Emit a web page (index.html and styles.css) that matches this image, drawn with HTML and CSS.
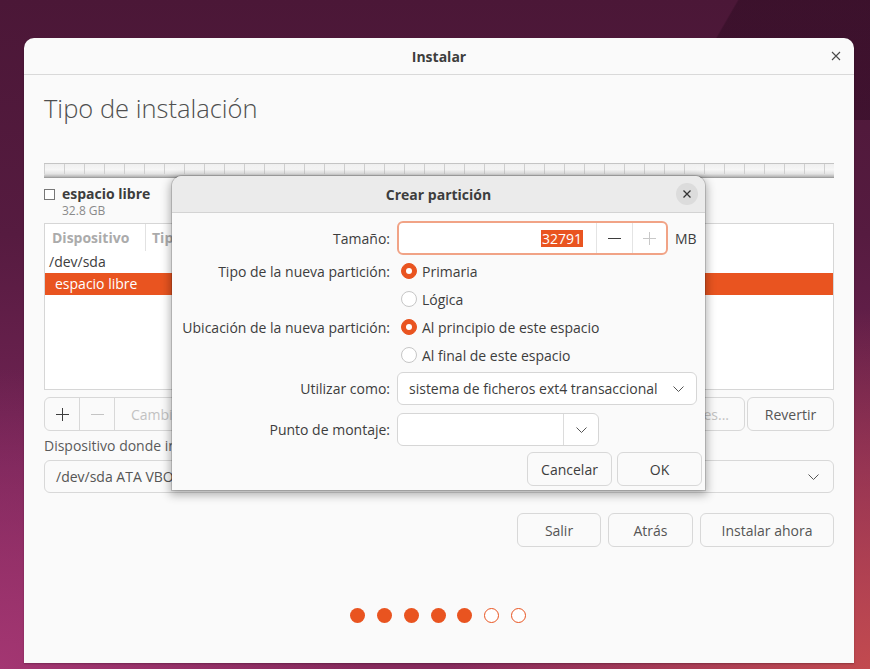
FILE: index.html
```html
<!DOCTYPE html>
<html lang="es">
<head>
<meta charset="utf-8">
<title>Instalar</title>
<link rel="stylesheet" href="styles.css">
</head>
<body>
<div class="desktop">
  <div class="window">
    <header class="titlebar">
      <span></span>
      <span class="title">Instalar</span>
      <span class="wclose"><svg width="10" height="10" viewBox="0 0 10 10"><path d="M1 1l8 8M9 1l-8 8" stroke="#4a4a4a" stroke-width="1.1" fill="none"/></svg></span>
    </header>
    <main class="content">
      <h1 class="heading">Tipo de instalación</h1>
      <div class="partbar"></div>
      <div class="legend">
        <span class="check"></span>
        <div>
          <div class="legend-name">espacio libre</div>
          <div class="legend-size">32.8 GB</div>
        </div>
      </div>
      <div class="table">
        <div class="thead">
          <span class="th th1">Dispositivo</span>
          <span class="th th2">Tipo</span>
        </div>
        <div class="trow">/dev/sda</div>
        <div class="trow sel">espacio libre</div>
      </div>
      <div class="toolbar">
        <div class="group">
          <span class="gbtn icon"><svg width="13" height="13" viewBox="0 0 13 13"><path d="M6.5 0v13M0 6.5h13" stroke="#3d3d3d" stroke-width="1" fill="none"/></svg></span>
          <span class="gbtn icon"><svg width="13" height="13" viewBox="0 0 13 13"><path d="M0 6.5h13" stroke="#c4c4c4" stroke-width="1" fill="none"/></svg></span>
          <span class="gbtn text dis">Cambiar...</span>
        </div>
        <span class="spacer"></span>
        <span class="btn dis newtable">Nueva tabla de particiones...</span>
        <span class="btn revert">Revertir</span>
      </div>
      <div class="boot-label">Dispositivo donde instalar el cargador de arranque:</div>
      <div class="boot-combo">
        <span>/dev/sda ATA VBOX HARDDISK (32.8 GB)</span>
        <svg width="11" height="6" viewBox="0 0 11 6"><path d="M0.5 0.5l5 5 5-5" stroke="#555" stroke-width="1" fill="none"/></svg>
      </div>
      <div class="actions">
        <span class="btn act w84">Salir</span>
        <span class="btn act w85">Atrás</span>
        <span class="btn act w134">Instalar ahora</span>
      </div>
      <div class="dots">
        <span class="dot"></span><span class="dot"></span><span class="dot"></span><span class="dot"></span><span class="dot"></span><span class="dot open"></span><span class="dot open"></span>
      </div>
    </main>

    <section class="dialog">
      <header class="dhead">
        <span></span>
        <span class="dtitle">Crear partición</span>
        <span class="dclose"><svg width="10" height="10" viewBox="0 0 10 10"><path d="M1.5 1.5l7 7M8.5 1.5l-7 7" stroke="#333" stroke-width="1.3" fill="none"/></svg></span>
      </header>
      <div class="dbody">
        <div class="frow r-size">
          <span class="flabel">Tamaño:</span>
          <div class="fctl">
            <div class="spin">
              <span class="spin-text"><span class="selected">32791</span></span>
              <span class="spin-btn"><svg width="13" height="13" viewBox="0 0 13 13"><path d="M0 6.5h13" stroke="#3d3d3d" stroke-width="1" fill="none"/></svg></span>
              <span class="spin-btn last"><svg width="13" height="13" viewBox="0 0 13 13"><path d="M6.5 0v13M0 6.5h13" stroke="#c8c8c8" stroke-width="1" fill="none"/></svg></span>
            </div>
            <span class="unit">MB</span>
          </div>
        </div>
        <div class="frow r-radio first">
          <span class="flabel">Tipo de la nueva partición:</span>
          <div class="fctl"><span class="radio on"></span><span>Primaria</span></div>
        </div>
        <div class="frow r-radio">
          <span class="flabel"></span>
          <div class="fctl"><span class="radio"></span><span>Lógica</span></div>
        </div>
        <div class="frow r-radio">
          <span class="flabel">Ubicación de la nueva partición:</span>
          <div class="fctl"><span class="radio on"></span><span>Al principio de este espacio</span></div>
        </div>
        <div class="frow r-radio">
          <span class="flabel"></span>
          <div class="fctl"><span class="radio"></span><span>Al final de este espacio</span></div>
        </div>
        <div class="frow r-use">
          <span class="flabel">Utilizar como:</span>
          <div class="fctl">
            <div class="dcombo">
              <span>sistema de ficheros ext4 transaccional</span>
              <svg width="11" height="6" viewBox="0 0 11 6"><path d="M0.5 0.5l5 5 5-5" stroke="#555" stroke-width="1" fill="none"/></svg>
            </div>
          </div>
        </div>
        <div class="frow r-mount">
          <span class="flabel">Punto de montaje:</span>
          <div class="fctl">
            <div class="mcombo">
              <span class="mentry"></span>
              <span class="mbtn"><svg width="11" height="6" viewBox="0 0 11 6"><path d="M0.5 0.5l5 5 5-5" stroke="#555" stroke-width="1" fill="none"/></svg></span>
            </div>
          </div>
        </div>
        <div class="dactions">
          <span class="btn dbtn">Cancelar</span>
          <span class="btn dbtn">OK</span>
        </div>
      </div>
    </section>
  </div>
</div>
</body>
</html>
```

FILE: styles.css
```css
* { box-sizing: border-box; }

html, body {
  margin: 0;
  padding: 0;
}

body {
  width: 870px;
  height: 669px;
  overflow: hidden;
  font-family: "Open Sans", "Noto Sans", sans-serif;
  font-size: 14px;
  color: #3d3d3d;
}

.desktop {
  width: 870px;
  height: 669px;
  padding: 38px 0 0 24px;
  background:
    linear-gradient(120deg, transparent 0, transparent 78.5%, rgba(20, 0, 15, 0.28) 78.7%, rgba(20, 0, 15, 0.28) 100%) top / 100% 120px no-repeat,
    radial-gradient(ellipse 420px 360px at 100% 100%, #c24a4f 0%, rgba(194, 74, 79, 0) 100%),
    radial-gradient(ellipse 360px 300px at 0% 100%, #a33672 0%, rgba(163, 54, 114, 0) 100%),
    linear-gradient(180deg, #4b1737 0%, #561b40 35%, #742456 70%, #862a5d 100%);
}

.window {
  position: relative;
  width: 830px;
  height: 625px;
  background: #fafafa;
  border-radius: 10px 10px 0 0;
  display: flex;
  flex-direction: column;
  box-shadow: 0 1px 2px rgba(0, 0, 0, 0.25);
}

/* title bar */
.titlebar {
  height: 37px;
  flex: none;
  border-bottom: 1px solid #d9d9d9;
  display: grid;
  grid-template-columns: 1fr auto 1fr;
  align-items: center;
}

.title {
  font-weight: 700;
  font-size: 14px;
  color: #3d3d3d;
}

.wclose {
  justify-self: end;
  padding-right: 13px;
  display: flex;
}

/* main content */
.content {
  padding: 0 20px;
  display: flex;
  flex-direction: column;
}

.heading {
  margin: 17px 0 0;
  font-size: 25.5px;
  line-height: 32px;
  font-weight: 300;
  color: #4f4f4f;
}

.partbar {
  margin-top: 39px;
  height: 15px;
  border-top: 1px solid #c4c4c4;
  background:
    repeating-linear-gradient(90deg, #cfcfcf 0, #cfcfcf 1px, transparent 1px, transparent 20px) 0 0 / 100% 10px no-repeat,
    linear-gradient(180deg, #efefef 0%, #f6f6f6 40%, #e4e4e4 70%, #b8b8b8 90%, #8f8f8f 100%);
}

.legend {
  margin-top: 7px;
  display: flex;
  gap: 7px;
}

.check {
  width: 11px;
  height: 11px;
  margin-top: 4px;
  border: 1px solid #777;
  background: #fff;
  flex: none;
}

.legend-name {
  font-weight: 700;
  line-height: 18px;
  color: #3d3d3d;
}

.legend-size {
  font-size: 12px;
  line-height: 15px;
  color: #8a8a8a;
}

.table {
  margin-top: 5px;
  height: 167px;
  border: 1px solid #d6d6d6;
  background: #fff;
}

.thead {
  height: 27px;
  display: flex;
  align-items: center;
}

.th {
  font-weight: 700;
  color: #ababab;
  height: 27px;
  line-height: 27px;
}

.th1 {
  width: 101px;
  padding-left: 7px;
  border-right: 1px solid #e2e2e2;
}

.th2 {
  padding-left: 6px;
}

.trow {
  height: 22px;
  line-height: 22px;
  padding-left: 4px;
  color: #3d3d3d;
}

.trow.sel {
  background: #e95420;
  color: #fff;
  padding-left: 10px;
}

.toolbar {
  margin-top: 7px;
  height: 34px;
  display: flex;
}

.group {
  display: flex;
  border: 1px solid #d8d8d8;
  border-radius: 6px;
  background: #fafafa;
}

.gbtn {
  height: 32px;
  display: flex;
  align-items: center;
  justify-content: center;
}

.gbtn.icon {
  width: 35px;
  border-right: 1px solid #d8d8d8;
}

.gbtn.text {
  padding: 0 40px 0 16px;
}

.dis {
  color: #c2c2c2;
}

.spacer {
  flex: 1;
}

.btn {
  display: flex;
  align-items: center;
  justify-content: center;
  height: 34px;
  border: 1px solid #d8d8d8;
  border-radius: 6px;
  background: #fafafa;
  white-space: nowrap;
}

.newtable {
  padding: 0 15px;
}

.revert {
  margin-left: 2px;
  width: 87px;
  color: #555;
}

.boot-label {
  margin-top: 5px;
  line-height: 20px;
  color: #5a5a5a;
  white-space: nowrap;
}

.boot-combo {
  margin-top: 4px;
  height: 33px;
  border: 1px solid #d8d8d8;
  border-radius: 6px;
  background: #fafafa;
  display: flex;
  align-items: center;
  justify-content: space-between;
  padding: 0 14px 0 11px;
  color: #555;
}

.actions {
  margin-top: 20px;
  display: flex;
  justify-content: flex-end;
  gap: 7px;
}

.act {
  color: #555;
}

.w84 { width: 84px; }
.w85 { width: 85px; }
.w134 { width: 134px; }

.dots {
  margin-top: 61px;
  display: flex;
  justify-content: center;
  gap: 11.7px;
  padding-right: 2px;
}

.dot {
  width: 15px;
  height: 15px;
  border-radius: 50%;
  background: #e95420;
}

.dot.open {
  background: #fff;
  border: 1.5px solid #e95420;
}

/* dialog */
.dialog {
  position: absolute;
  left: 148px;
  top: 138px;
  width: 533px;
  height: 314px;
  background: #fafafa;
  border-radius: 10px 10px 0 0;
  box-shadow: 0 0 0 1px rgba(0, 0, 0, 0.14), 0 3px 10px 2px rgba(0, 0, 0, 0.3);
  display: flex;
  flex-direction: column;
}

.dhead {
  height: 37px;
  flex: none;
  background: #ebebeb;
  border-radius: 10px 10px 0 0;
  border-bottom: 1px solid #d3d3d3;
  display: grid;
  grid-template-columns: 1fr auto 1fr;
  align-items: center;
}

.dtitle {
  font-weight: 700;
  color: #3d3d3d;
}

.dclose {
  justify-self: end;
  margin-right: 7px;
  width: 22px;
  height: 22px;
  border-radius: 50%;
  background: #dcdcdc;
  display: flex;
  align-items: center;
  justify-content: center;
}

.dbody {
  padding: 8px 0 0 8px;
  display: flex;
  flex-direction: column;
}

.frow {
  display: grid;
  grid-template-columns: 210px 1fr;
  column-gap: 8px;
  align-items: center;
}

.flabel {
  text-align: right;
  white-space: nowrap;
  color: #3d3d3d;
}

.fctl {
  display: flex;
  align-items: center;
}

.r-size { height: 34px; }
.r-radio { height: 28px; }
.r-radio.first { margin-top: 2px; }
.r-use { height: 33px; margin-top: 3px; }
.r-mount { height: 33px; margin-top: 8px; }

.spin {
  width: 271px;
  height: 34px;
  margin-left: -1px;
  border: 2px solid #f1a386;
  border-radius: 6px;
  background: #fff;
  display: flex;
}

.spin-text {
  flex: 1;
  display: flex;
  align-items: center;
  justify-content: flex-end;
  padding-right: 13px;
}

.selected {
  background: #e95420;
  color: #fff;
  line-height: 17px;
  padding: 0 1px;
}

.spin-btn {
  width: 36px;
  border-left: 1px solid #e4e4e4;
  display: flex;
  align-items: center;
  justify-content: center;
}

.spin-btn.last {
  width: 34px;
}

.unit {
  margin-left: 7px;
}

.radio {
  width: 16px;
  height: 16px;
  margin: 0 5px 0 3px;
  border-radius: 50%;
  border: 1px solid #c6c6c6;
  background: #fff;
  position: relative;
  flex: none;
}

.radio.on {
  border-color: #e95420;
  background: #e95420;
}

.radio.on::after {
  content: "";
  position: absolute;
  left: 4px;
  top: 4px;
  width: 6px;
  height: 6px;
  border-radius: 50%;
  background: #fff;
}

.dcombo {
  width: 300px;
  height: 33px;
  margin-left: -1px;
  border: 1px solid #d6d6d6;
  border-radius: 6px;
  background: #fff;
  display: flex;
  align-items: center;
  justify-content: space-between;
  padding: 0 12px 0 11px;
}

.mcombo {
  width: 202px;
  height: 33px;
  margin-left: -1px;
  border: 1px solid #d6d6d6;
  border-radius: 6px;
  background: #fff;
  display: flex;
}

.mentry {
  flex: 1;
}

.mbtn {
  width: 35px;
  border-left: 1px solid #dcdcdc;
  display: flex;
  align-items: center;
  justify-content: center;
}

.dactions {
  margin-top: 6px;
  display: flex;
  justify-content: flex-end;
  gap: 5px;
  padding-right: 3px;
}

.dbtn {
  width: 85px;
  color: #3d3d3d;
}
```
